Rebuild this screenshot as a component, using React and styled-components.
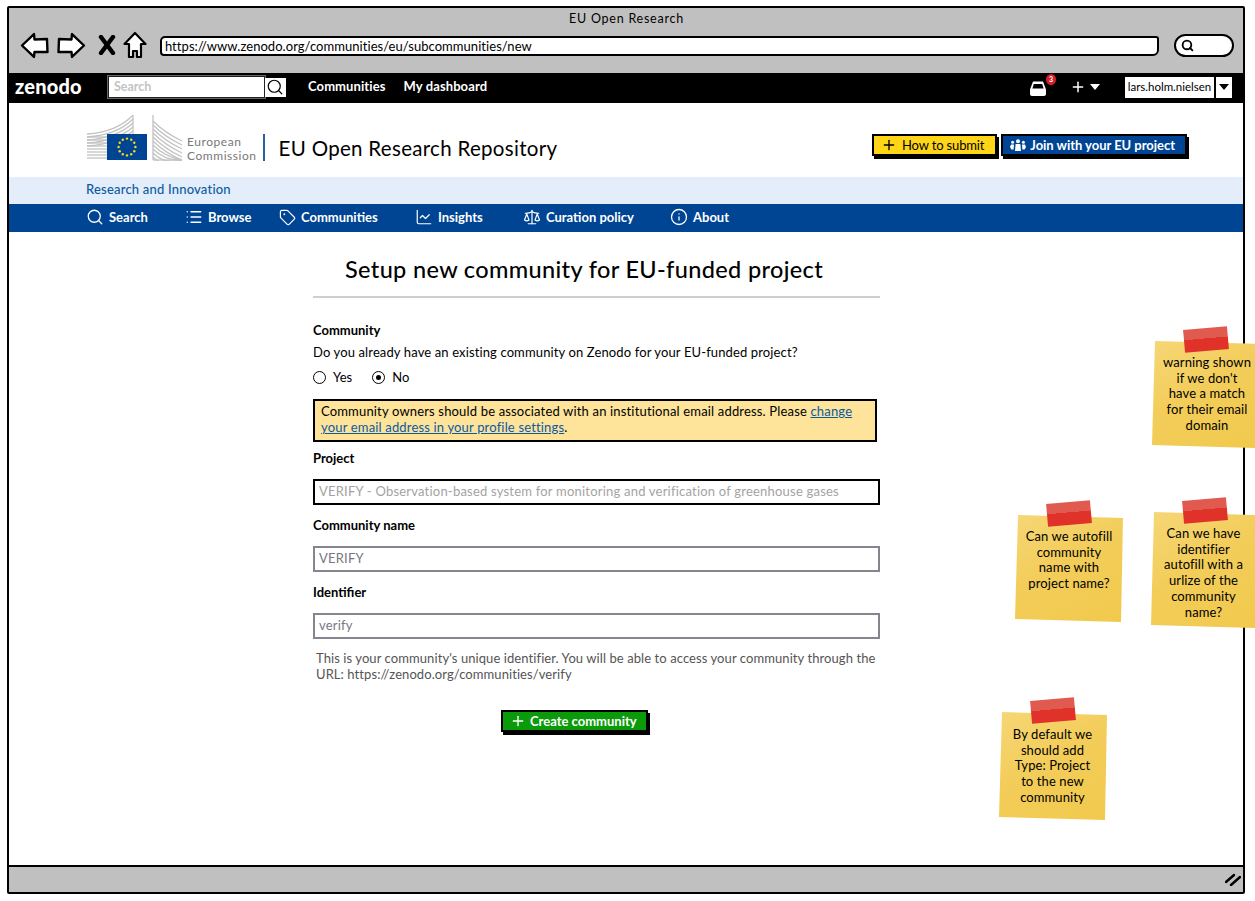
import styled, { createGlobalStyle } from "styled-components";
import { Search, List, Tag, LineChart, Scale, Info, Plus } from "lucide-react";

const FONT = `"Lato", "Liberation Sans", sans-serif`;

const GlobalStyle = createGlobalStyle`
  html, body {
    margin: 0;
    padding: 0;
    background: #fff;
  }
  body {
    font-family: ${FONT};
    font-size: 13px;
    color: #000;
  }
  * {
    box-sizing: border-box;
  }
`;

const Page = styled.div`
  position: relative;
  width: 1255px;
  height: 901px;
  overflow: hidden;
  padding: 6px 0 0 7px;
`;

const Frame = styled.div`
  width: 1238px;
  height: 888px;
  border: 2px solid #000;
  border-radius: 2px;
  display: flex;
  flex-direction: column;
  background: #fff;
`;

const BrowserBar = styled.div`
  height: 65px;
  background: #c0c0c0;
  padding: 3px 9px 0 11px;
`;

const WindowTitle = styled.div`
  text-align: center;
  font-size: 12.5px;
  line-height: 16px;
  letter-spacing: 0.75px;
  margin-right: 1px;
`;

const BrowserRow = styled.div`
  display: flex;
  align-items: center;
  height: 36px;
`;

const AddressBar = styled.div`
  width: 1000px;
  height: 20px;
  margin-left: 13px;
  border: 2px solid #000;
  border-radius: 5px 3px 6px 4px;
  background: #fff;
  font-size: 13px;
  line-height: 16px;
  padding-left: 3px;
  letter-spacing: 0.05px;
  margin-top: 1px;
`;

const SearchPill = styled.div`
  width: 60px;
  height: 23px;
  margin-left: 15px;
  border: 2px solid #000;
  border-radius: 12px;
  background: #fff;
  display: flex;
  align-items: center;
  padding-left: 5px;
`;

const TopNav = styled.nav`
  height: 30px;
  background: #000;
  display: flex;
  align-items: center;
  padding: 0 11px 2px 6px;
  color: #fff;
`;

const ZenodoLogo = styled.span`
  font-size: 20px;
  font-weight: 900;
  width: 93px;
  letter-spacing: 0.2px;
  padding-bottom: 2px;
`;

const SearchBox = styled.div`
  width: 157px;
  height: 22px;
  background: #fff;
  border: 1px solid #222;
  outline: 1px solid #666;
  color: #c4c4c4;
  font-weight: 700;
  font-size: 12.5px;
  line-height: 19px;
  padding-left: 5px;
`;

const SearchIconBox = styled.div`
  width: 21px;
  height: 19px;
  background: #fff;
  color: #000;
  display: flex;
  align-items: center;
  padding-left: 1px;
`;

const TopLink = styled.span`
  font-weight: 700;
  font-size: 13px;
  margin-left: ${(p) => p.$gap}px;
  letter-spacing: 0.1px;
  padding-bottom: 2px;
`;

const TopRight = styled.div`
  margin-left: auto;
  display: flex;
  align-items: center;
`;

const InboxWrap = styled.div`
  position: relative;
  width: 16px;
  height: 15px;
  margin: 2px 24px 0 0;
`;

const Badge = styled.span`
  position: absolute;
  top: -7px;
  left: 16px;
  width: 10px;
  height: 11px;
  border-radius: 50%;
  background: #d32027;
  color: #fff;
  font-size: 7px;
  font-weight: 700;
  line-height: 11px;
  text-align: center;
`;

const Caret = styled.span`
  width: 0;
  height: 0;
  border-left: 5px solid transparent;
  border-right: 5px solid transparent;
  border-top: 6px solid ${(p) => p.$color};
  margin-left: ${(p) => p.$gap || 0}px;
`;

const UserBox = styled.div`
  width: 89px;
  height: 21px;
  margin-left: 25px;
  background: #fff;
  color: #000;
  font-size: 11.5px;
  line-height: 19px;
  text-align: center;
`;

const UserCaret = styled.div`
  width: 16px;
  height: 21px;
  margin-left: 2px;
  background: #fff;
  display: flex;
  align-items: center;
  justify-content: center;
`;

const BrandHeader = styled.header`
  height: 74px;
  display: flex;
  align-items: flex-start;
  padding: 12px 56px 0 78px;
`;

const LogoText = styled.div`
  font-size: 12px;
  line-height: 13.5px;
  color: #787878;
  margin: 20px 0 0 4px;
  letter-spacing: 0.55px;
`;

const BrandDivider = styled.div`
  width: 2px;
  height: 27px;
  background: #2a5f9e;
  margin: 19px 0 0 6px;
`;

const BrandTitle = styled.div`
  font-size: 20.5px;
  line-height: 26px;
  margin: 20px 0 0 14px;
  letter-spacing: 0.3px;
`;

const HeaderButtons = styled.div`
  margin-left: auto;
  margin-top: 19px;
  display: flex;
  gap: 4px;
`;

const SketchButton = styled.div`
  height: 22px;
  display: flex;
  align-items: center;
  gap: ${(p) => p.$gap}px;
  padding: 0 ${(p) => p.$right}px 0 ${(p) => p.$left}px;
  background: ${(p) => p.$bg};
  color: ${(p) => p.$color};
  border: 2px solid #000;
  box-shadow: 2px 3px 0 #000;
  font-size: 13px;
  letter-spacing: ${(p) => p.$spacing || 0}px;
  font-weight: ${(p) => p.$weight || 400};
`;

const SubHeader = styled.div`
  height: 27px;
  background: #e3eefa;
  color: #0b5aa3;
  padding-left: 77px;
  font-size: 13px;
  font-weight: 500;
  line-height: 25px;
  letter-spacing: 0.2px;
`;

const BlueNav = styled.nav`
  height: 28px;
  background: #004494;
  color: #fff;
  display: flex;
  align-items: center;
  padding: 0 0 2px 77px;
`;

const BlueItem = styled.div`
  width: ${(p) => p.$w}px;
  display: flex;
  align-items: center;
  gap: 5px;
  font-weight: 700;
  font-size: 13px;
  white-space: nowrap;
`;

const Main = styled.main`
  flex: 1;
  padding: 0 0 0 304px;
`;

const Form = styled.div`
  width: 567px;
`;

const PageTitle = styled.h1`
  margin: 0;
  padding: 21px 0 0 32px;
  height: 66px;
  font-size: 23.5px;
  line-height: 32px;
  font-weight: 500;
  letter-spacing: 0.35px;
  border-bottom: 2px solid #cfcfcf;
  white-space: nowrap;
`;

const Label = styled.div`
  font-weight: 700;
  font-size: 13px;
  line-height: 16px;
  margin-top: ${(p) => p.$top}px;
`;

const Question = styled.div`
  margin-top: 6px;
  font-size: 13px;
  line-height: 16px;
  letter-spacing: 0.125px;
`;

const RadioRow = styled.div`
  display: flex;
  align-items: center;
  margin-top: 9px;
  height: 16px;
`;

const Radio = styled.span`
  width: 13px;
  height: 13px;
  border: 1px solid #000;
  border-radius: 50%;
  margin-right: 7px;
  display: flex;
  align-items: center;
  justify-content: center;
  &::after {
    content: "";
    width: 5px;
    height: 5px;
    border-radius: 50%;
    background: ${(p) => (p.$on ? "#000" : "transparent")};
  }
`;

const RadioText = styled.span`
  margin-right: 20px;
`;

const Warning = styled.div`
  margin-top: 14px;
  width: 564px;
  height: 43px;
  background: #fee39a;
  border: 2px solid #000;
  padding: 2px 6px;
  font-size: 13px;
  line-height: 16px;
  letter-spacing: 0.165px;
`;

const WarningLink = styled.a`
  color: #0b5aa3;
  text-decoration: underline;
`;

const TextField = styled.input`
  display: block;
  width: 567px;
  height: 26px;
  margin-top: 13px;
  border: 2px solid ${(p) => p.$line};
  background: #fff;
  color: ${(p) => p.$color};
  padding: 0 4px 2px;
  font-family: ${FONT};
  font-size: 13px;
  letter-spacing: 0.21px;
  outline: none;
`;

const HelpText = styled.div`
  margin: 11px 0 0 3px;
  width: 564px;
  color: #555;
  font-size: 13px;
  line-height: 16px;
  letter-spacing: 0.08px;
`;

const CreateRow = styled.div`
  display: flex;
  margin: 28px 0 0 188px;
`;

const BottomBar = styled.div`
  height: 27px;
  background: #c0c0c0;
  border-top: 2px solid #000;
  display: flex;
  align-items: center;
  justify-content: flex-end;
  padding-right: 2px;
`;

const Note = styled.aside`
  position: absolute;
  left: ${(p) => p.$x}px;
  top: ${(p) => p.$y}px;
  width: 108px;
  height: ${(p) => p.$h}px;
  padding: ${(p) => p.$top}px ${(p) => p.$right}px 0 7px;
  text-align: center;
  font-size: 13px;
  line-height: 15.7px;
  letter-spacing: 0.1px;
  &::before {
    content: "";
    position: absolute;
    inset: 0;
    background: linear-gradient(150deg, #f6d777 0%, #f3cd5a 45%, #f1c94c 100%);
    clip-path: polygon(3px 0, 100% 3px, 106px 100%, 0 calc(100% - 3px));
  }
  &::after {
    content: "";
    position: absolute;
    left: 32px;
    top: -13px;
    width: 44px;
    height: 23px;
    transform: rotate(-5deg);
    background: linear-gradient(#e15a4f 0 45%, #e03228 45% 100%);
  }
`;

const NoteText = styled.div`
  position: relative;
`;

const ArrowIcon = ({ flip, left }) => (
  <svg
    width="30"
    height="27"
    viewBox="0 0 30 27"
    style={{ marginLeft: left, transform: flip ? "scaleX(-1)" : undefined }}
  >
    <path
      d="M2 13.5 L14 2 L14.5 7.5 L27 7 L27.5 20 L14.5 20 L14 25 Z"
      fill="#fff"
      stroke="#000"
      strokeWidth="2.4"
      strokeLinejoin="round"
    />
  </svg>
);

const CloseIcon = () => (
  <svg width="18" height="20" viewBox="0 0 18 20" style={{ marginLeft: 12 }}>
    <path d="M3 2 L15 18 M15 2 L3 18" stroke="#000" strokeWidth="4.4" strokeLinecap="round" />
  </svg>
);

const HomeIcon = () => (
  <svg width="24" height="28" viewBox="0 0 24 28" style={{ marginLeft: 7 }}>
    <path
      d="M12 2 L22.5 13 L18 13 L18 26 L14 26 L14 20 L10 20 L10 26 L6 26 L6 13 L1.5 13 Z"
      fill="#fff"
      stroke="#000"
      strokeWidth="2.2"
      strokeLinejoin="round"
    />
  </svg>
);

const InboxIcon = () => (
  <svg width="16" height="15" viewBox="0 0 16 15">
    <path
      d="M3 0.5 H13 L16 8.5 V13 Q16 15 14 15 H2 Q0 15 0 13 V8.5 Z"
      fill="#fff"
    />
    <path d="M3.8 3 H12.2 L13.6 7.5 H2.4 Z" fill="#000" />
  </svg>
);

const UsersIcon = () => (
  <svg width="16" height="12" viewBox="0 0 16 12" fill="#fff">
    <circle cx="8" cy="2.2" r="2" />
    <circle cx="2.6" cy="3.2" r="1.5" />
    <circle cx="13.4" cy="3.2" r="1.5" />
    <path d="M5.6 5 H10.4 L11 12 H5 Z" />
    <path d="M1 5.4 H4 L3.6 10.5 H1.4 L0 8 Z" />
    <path d="M12 5.4 H15 L16 8 L14.6 10.5 H12.4 Z" />
  </svg>
);

const GripIcon = () => (
  <svg width="16" height="13" viewBox="0 0 16 13">
    <path d="M1 9 L9 2 M6 12 L15 4" stroke="#000" strokeWidth="2.4" strokeLinecap="round" />
  </svg>
);

const stars = Array.from({ length: 12 }, (_, i) => {
  const a = (i * Math.PI) / 6;
  return [40 + 8.4 * Math.sin(a), 32 - 8.4 * Math.cos(a)];
});

// stripes of the two Berlaymont wings
const leftStripes = [22, 25, 28, 31, 34, 37, 40, 43];
const rightStripes = [6, 10, 14, 18, 22, 26, 30, 34, 38, 42];

const EcLogo = () => (
  <svg width="96" height="46" viewBox="0 0 96 46">
    <g stroke="#c3c3c3" strokeWidth="1.3" fill="none">
      {leftStripes.map((y) => (
        <path key={y} d={`M0 ${y} H20`} />
      ))}
      {[7, 10, 13, 16, 19].map((y, i) => (
        <path key={y} d={`M0 ${y + 12} Q30 ${y + 10} 46 ${i * 4}`} />
      ))}
      <path d="M46 0 V19" />
      <path d="M66 0 V45" />
      {rightStripes.map((y) => (
        <path key={y} d={`M66 ${y} Q78 ${y + 12} 95 ${Math.min(y + 20, 45)}`} />
      ))}
      <path d="M66 45 H95" />
    </g>
    <rect x="20" y="19" width="40" height="26" fill="#004494" />
    {stars.map(([cx, cy]) => (
      <circle key={`${cx}-${cy}`} cx={cx} cy={cy} r="1.2" fill="#ffd617" />
    ))}
  </svg>
);

const notes = [
  { x: 1152, y: 341, h: 107, top: 14, right: 5, lines: ["warning shown", "if we don't", "have a match", "for their email", "domain"] },
  { x: 1015, y: 515, h: 107, top: 14, right: 7, lines: ["Can we autofill", "community", "name with", "project name?"] },
  { x: 1151, y: 512, h: 116, top: 14, right: 10, lines: ["Can we have", "identifier", "autofill with a", "urlize of the", "community", "name?"] },
  { x: 999, y: 712, h: 108, top: 15, right: 8, lines: ["By default we", "should add", "Type: Project", "to the new", "community"] },
];

const App = () => {
  return (
    <Page>
      <GlobalStyle />
      <Frame>
        <BrowserBar>
          <WindowTitle>EU Open Research</WindowTitle>
          <BrowserRow>
            <ArrowIcon />
            <ArrowIcon flip left={6} />
            <CloseIcon />
            <HomeIcon />
            <AddressBar>https://www.zenodo.org/communities/eu/subcommunities/new</AddressBar>
            <SearchPill>
              <Search size={13} strokeWidth={3.4} color="#000" />
            </SearchPill>
          </BrowserRow>
        </BrowserBar>

        <TopNav>
          <ZenodoLogo>zenodo</ZenodoLogo>
          <SearchBox>Search</SearchBox>
          <SearchIconBox>
            <Search size={18} strokeWidth={1.6} />
          </SearchIconBox>
          <TopLink $gap={22}>Communities</TopLink>
          <TopLink $gap={18}>My dashboard</TopLink>
          <TopRight>
            <InboxWrap>
              <InboxIcon />
              <Badge>3</Badge>
            </InboxWrap>
            <Plus size={16} strokeWidth={2.2} />
            <Caret $color="#fff" $gap={4} />
            <UserBox>lars.holm.nielsen</UserBox>
            <UserCaret>
              <Caret $color="#000" />
            </UserCaret>
          </TopRight>
        </TopNav>

        <BrandHeader>
          <EcLogo />
          <LogoText>
            European
            <br />
            Commission
          </LogoText>
          <BrandDivider />
          <BrandTitle>EU Open Research Repository</BrandTitle>
          <HeaderButtons>
            <SketchButton $bg="#ffd617" $color="#000" $left={7} $right={11} $gap={5} $spacing={-0.15}>
              <Plus size={16} strokeWidth={2} />
              How to submit
            </SketchButton>
            <SketchButton $bg="#004494" $color="#fff" $left={7} $right={10} $gap={4} $spacing={-0.03} $weight={700}>
              <UsersIcon />
              Join with your EU project
            </SketchButton>
          </HeaderButtons>
        </BrandHeader>

        <SubHeader>Research and Innovation</SubHeader>

        <BlueNav>
          <BlueItem $w={99}>
            <Search size={18} strokeWidth={1.7} />
            Search
          </BlueItem>
          <BlueItem $w={94}>
            <List size={18} strokeWidth={1.8} />
            Browse
          </BlueItem>
          <BlueItem $w={136}>
            <Tag size={17} strokeWidth={1.7} />
            Communities
          </BlueItem>
          <BlueItem $w={108}>
            <LineChart size={18} strokeWidth={1.6} />
            Insights
          </BlueItem>
          <BlueItem $w={147}>
            <Scale size={18} strokeWidth={1.6} />
            Curation policy
          </BlueItem>
          <BlueItem $w={80}>
            <Info size={18} strokeWidth={1.7} />
            About
          </BlueItem>
        </BlueNav>

        <Main>
          <Form>
            <PageTitle>Setup new community for EU-funded project</PageTitle>
            <Label $top={24}>Community</Label>
            <Question>Do you already have an existing community on Zenodo for your EU-funded project?</Question>
            <RadioRow>
              <Radio />
              <RadioText>Yes</RadioText>
              <Radio $on />
              <RadioText>No</RadioText>
            </RadioRow>
            <Warning>
              Community owners should be associated with an institutional email address. Please{" "}
              <WarningLink href="#">change your email address in your profile settings</WarningLink>.
            </Warning>
            <Label $top={8}>Project</Label>
            <TextField
              readOnly
              $line="#000"
              $color="#a3a3a3"
              value="VERIFY - Observation-based system for monitoring and verification of greenhouse gases"
            />
            <Label $top={12}>Community name</Label>
            <TextField readOnly $line="#85858f" $color="#77777f" value="VERIFY" />
            <Label $top={12}>Identifier</Label>
            <TextField readOnly $line="#85858f" $color="#77777f" value="verify" />
            <HelpText>
              This is your community's unique identifier. You will be able to access your community through the URL:
              https://zenodo.org/communities/verify
            </HelpText>
            <CreateRow>
              <SketchButton $bg="#0a9a0a" $color="#fff" $left={7} $right={9} $gap={4} $weight={700}>
                <Plus size={16} strokeWidth={2} />
                Create community
              </SketchButton>
            </CreateRow>
          </Form>
        </Main>

        <BottomBar>
          <GripIcon />
        </BottomBar>
      </Frame>

      {notes.map((note) => (
        <Note key={note.lines[0]} $x={note.x} $y={note.y} $h={note.h} $top={note.top} $right={note.right}>
          <NoteText>
            {note.lines.map((line) => (
              <div key={line}>{line}</div>
            ))}
          </NoteText>
        </Note>
      ))}
    </Page>
  );
};

export default App;
